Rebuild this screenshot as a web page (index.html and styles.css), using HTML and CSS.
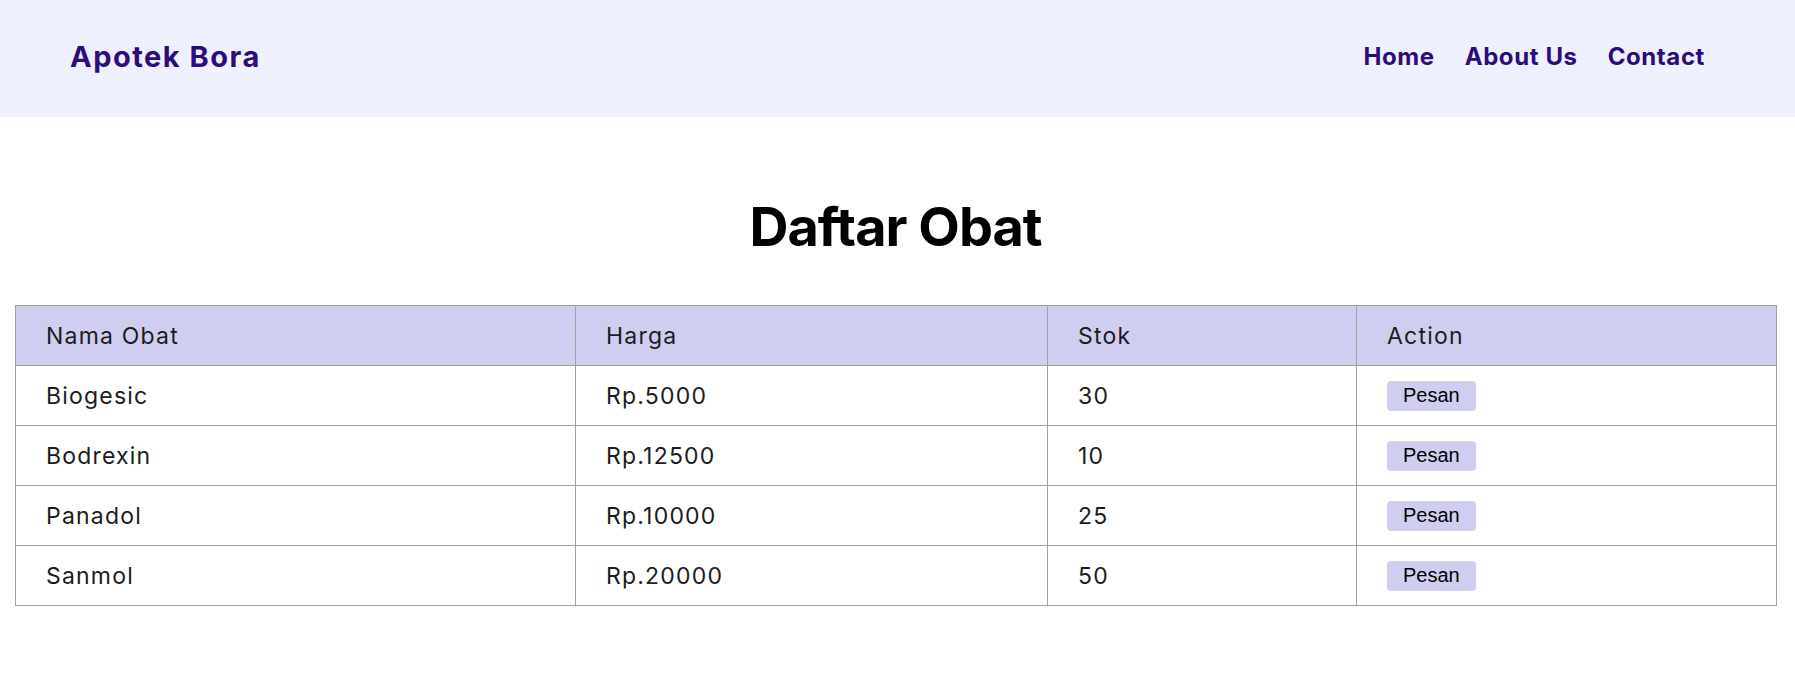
FILE: index.html
```html
<!DOCTYPE html>
<html lang="id">
<head>
<meta charset="utf-8">
<title>Apotek Bora</title>
<link rel="stylesheet" href="styles.css">
</head>
<body>
<header class="navbar">
  <div class="logo">Apotek Bora</div>
  <nav class="nav">
    <a class="nav-link" href="#">Home</a>
    <a class="nav-link" href="#">About Us</a>
    <a class="nav-link" href="#">Contact</a>
  </nav>
</header>
<main class="content">
  <h1 class="title">Daftar Obat</h1>
  <table class="drug-table">
    <colgroup>
      <col class="col-name">
      <col class="col-price">
      <col class="col-stock">
      <col class="col-action">
    </colgroup>
    <thead>
      <tr><th>Nama Obat</th><th>Harga</th><th>Stok</th><th>Action</th></tr>
    </thead>
    <tbody>
      <tr><td>Biogesic</td><td>Rp.5000</td><td>30</td><td><button class="btn">Pesan</button></td></tr>
      <tr><td>Bodrexin</td><td>Rp.12500</td><td>10</td><td><button class="btn">Pesan</button></td></tr>
      <tr><td>Panadol</td><td>Rp.10000</td><td>25</td><td><button class="btn">Pesan</button></td></tr>
      <tr><td>Sanmol</td><td>Rp.20000</td><td>50</td><td><button class="btn">Pesan</button></td></tr>
    </tbody>
  </table>
</main>
</body>
</html>
```
FILE: styles.css
```css
* { box-sizing: border-box; }
body {
  margin: 0;
  font-family: "Inter", "Open Sans", sans-serif;
  color: #1c1c1c;
  background: #ffffff;
}
.navbar {
  height: 117px;
  background: #eef0ff;
  display: flex;
  align-items: center;
  justify-content: space-between;
  padding: 0 90px 4px 70px;
}
.logo {
  font-size: 29px;
  font-weight: 700;
  letter-spacing: 1.5px;
  color: #2e0b7a;
}
.nav {
  display: flex;
  gap: 30px;
}
.nav-link {
  font-size: 24px;
  font-weight: 700;
  letter-spacing: 0.6px;
  color: #2e0b7a;
  text-decoration: none;
}
.content {
  padding: 0 19px 0 15px;
}
.title {
  margin: 76px 0 44px;
  font-size: 54px;
  line-height: 68px;
  font-weight: 700;
  letter-spacing: -1px;
  text-align: center;
  color: #000;
}
.drug-table {
  width: 100%;
  table-layout: fixed;
  border-collapse: collapse;
  border: 1px solid #a0a0a0;
  font-size: 23px;
  letter-spacing: 1.2px;
}
.col-name { width: 560px; }
.col-price { width: 472px; }
.col-stock { width: 309px; }
.col-action { width: 420px; }
.drug-table th,
.drug-table td {
  border: 1px solid #a0a0a0;
  height: 60px;
  padding: 0 30px;
  text-align: left;
  font-weight: 400;
}
.drug-table th {
  background: #cfcef0;
}
.btn {
  font-family: "Liberation Sans", Arial, sans-serif;
  font-size: 20px;
  letter-spacing: 0;
  height: 30px;
  padding: 0 16px;
  border: none;
  border-radius: 4px;
  background: #cfcef0;
  color: #000;
  vertical-align: middle;
}
```
